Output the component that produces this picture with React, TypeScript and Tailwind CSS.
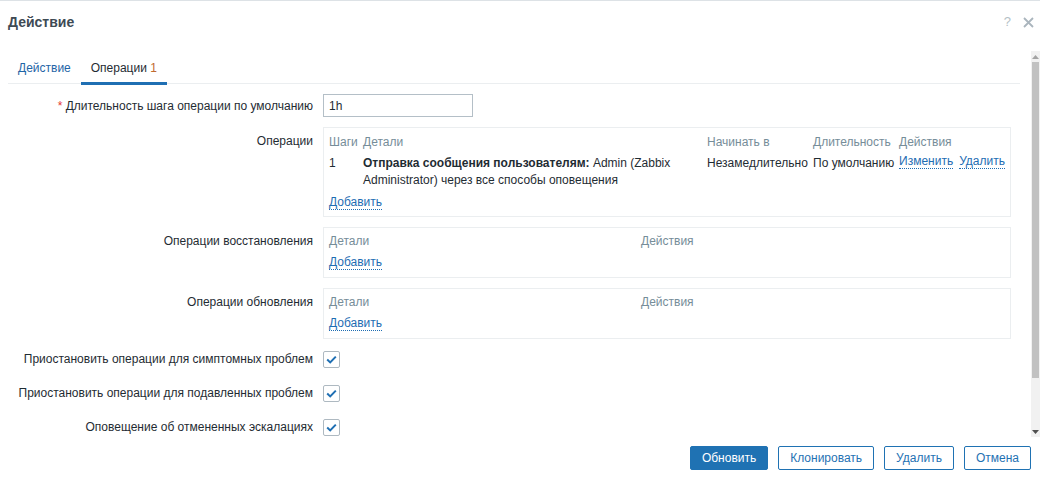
import React from "react";

const Link = ({ children }: { children: React.ReactNode }) => (
  <span className="text-[#1e6db3] border-b border-dotted border-[#1e6db3] leading-[13px] inline-block">{children}</span>
);

const Check = () => (
  <div className="w-[17px] h-[17px] border border-[#aeb9c1] rounded-[2px] bg-white flex items-center justify-center">
    <svg width="11" height="9" viewBox="0 0 11 9">
      <path d="M1.2 4.6 L4.2 7.4 L9.8 1.6" fill="none" stroke="#1f6fb3" strokeWidth="2" />
    </svg>
  </div>
);

const Label = ({ children, top }: { children: React.ReactNode; top?: boolean }) => (
  <div className={`w-[305px] shrink-0 text-right ${top ? "pt-[5px]" : "flex items-center justify-end"}`}>{children}</div>
);

const SmallBox = () => (
  <div className="flex-1 h-[51px] border border-[#ebeef0] px-[5px] pt-[5px]">
    <div className="grid grid-cols-[312px_1fr] h-[16px] leading-[16px] text-[#768d99]">
      <div>Детали</div>
      <div>Действия</div>
    </div>
    <div className="mt-[5px] h-[18px] flex items-center">
      <Link>Добавить</Link>
    </div>
  </div>
);

export default function App() {
  return (
    <div
      className="w-[1040px] h-[480px] bg-white border-t border-[#dde2e6] flex flex-col text-[12px] text-[#1f2c33] overflow-hidden"
      style={{ fontFamily: '"Liberation Sans", Arial, sans-serif' }}
    >
      {/* header */}
      <div className="h-[50px] shrink-0 flex items-start justify-between pl-[8px] pr-[6px] pt-[13px]">
        <div className="text-[14px] font-bold leading-[16px] text-[#3e4a54]">Действие</div>
        <div className="flex items-center gap-[12px] text-[#b5bfc6]">
          <span className="text-[13px] leading-[16px]">?</span>
          <svg width="11" height="11" viewBox="0 0 11 11">
            <path d="M1 1 L10 10 M10 1 L1 10" stroke="#aab5bd" strokeWidth="1.8" />
          </svg>
        </div>
      </div>

      {/* body */}
      <div className="h-[386px] shrink-0 flex">
        <div className="flex-1 pl-[8px] pr-[11px] overflow-hidden">
          {/* tabs */}
          <div className="flex border-b border-[#ebeef0] h-[33px]">
            <div className="px-[10px] pt-[10px] leading-[14px] text-[#1f65a6]">Действие</div>
            <div className="px-[10px] pt-[10px] pb-[6px] leading-[14px] border-b-[3px] border-[#1f6fb3] h-[34px]">
              Операции <span className="text-[#c0692f]">1</span>
            </div>
          </div>

          {/* form */}
          <div className="mt-[10px] pr-[9px] flex flex-col gap-[10px]">
            <div className="flex gap-[10px] h-[23px]">
              <Label>
                <span className="text-[#e33734]">*</span>&nbsp;Длительность шага операции по умолчанию
              </Label>
              <div className="w-[150px] h-[23px] border border-[#b4bfc7] px-[5px] flex items-center">1h</div>
            </div>

            <div className="flex gap-[10px]">
              <Label top>Операции</Label>
              <div className="flex-1 h-[90px] border border-[#ebeef0] px-[5px] pt-[5px]">
                <div className="grid grid-cols-[34px_344px_106px_86px_1fr]">
                  <div className="h-[18px] leading-[18px] text-[#768d99]">Шаги</div>
                  <div className="h-[18px] leading-[18px] text-[#768d99]">Детали</div>
                  <div className="h-[18px] leading-[18px] text-[#768d99]">Начинать в</div>
                  <div className="h-[18px] leading-[18px] text-[#768d99]">Длительность</div>
                  <div className="h-[18px] leading-[18px] text-[#768d99]">Действия</div>

                  <div className="mt-[4px] leading-[17px]">1</div>
                  <div className="mt-[4px] leading-[17px] pr-[30px]">
                    <b>Отправка сообщения пользователям:</b> Admin (Zabbix Administrator) через все способы оповещения
                  </div>
                  <div className="mt-[4px] leading-[17px]">Незамедлительно</div>
                  <div className="mt-[4px] leading-[17px]">По умолчанию</div>
                  <div className="mt-[4px] leading-[17px] flex gap-[6px] items-start">
                    <Link>Изменить</Link>
                    <Link>Удалить</Link>
                  </div>
                </div>
                <div className="mt-[5px] h-[18px] flex items-center">
                  <Link>Добавить</Link>
                </div>
              </div>
            </div>

            <div className="flex gap-[10px]">
              <Label top>Операции восстановления</Label>
              <SmallBox />
            </div>

            <div className="flex gap-[10px]">
              <Label top>Операции обновления</Label>
              <SmallBox />
            </div>

            <div className="flex flex-col gap-[14px]">
              {[
                "Приостановить операции для симптомных проблем",
                "Приостановить операции для подавленных проблем",
                "Оповещение об отмененных эскалациях",
              ].map((t) => (
                <div key={t} className="flex gap-[10px] h-[20px]">
                  <Label>{t}</Label>
                  <div className="flex items-center">
                    <Check />
                  </div>
                </div>
              ))}
            </div>
          </div>
        </div>

        {/* scrollbar */}
        <div className="w-[9px] shrink-0 bg-[#f1f1f1] flex flex-col items-center">
          <div className="h-[11px] flex items-center justify-center">
            <svg width="7" height="4" viewBox="0 0 7 4"><path d="M0 4 L3.5 0 L7 4 Z" fill="#a3a3a3" /></svg>
          </div>
          <div className="w-[7px] h-[316px] bg-[#c1c1c1]" />
          <div className="flex-1" />
          <div className="h-[11px] flex items-center justify-center">
            <svg width="7" height="4" viewBox="0 0 7 4"><path d="M0 0 L3.5 4 L7 0 Z" fill="#505050" /></svg>
          </div>
        </div>
      </div>

      {/* footer */}
      <div className="flex justify-end gap-[10px] pr-[9px] pt-[9px]">
        <button className="h-[24px] px-[11px] rounded-[2px] bg-[#1f72b3] border border-[#1f72b3] text-white">Обновить</button>
        <button className="h-[24px] px-[11px] rounded-[2px] bg-white border border-[#1f72b3] text-[#1f72b3]">Клонировать</button>
        <button className="h-[24px] px-[11px] rounded-[2px] bg-white border border-[#1f72b3] text-[#1f72b3]">Удалить</button>
        <button className="h-[24px] px-[11px] rounded-[2px] bg-white border border-[#1f72b3] text-[#1f72b3]">Отмена</button>
      </div>
    </div>
  );
}
